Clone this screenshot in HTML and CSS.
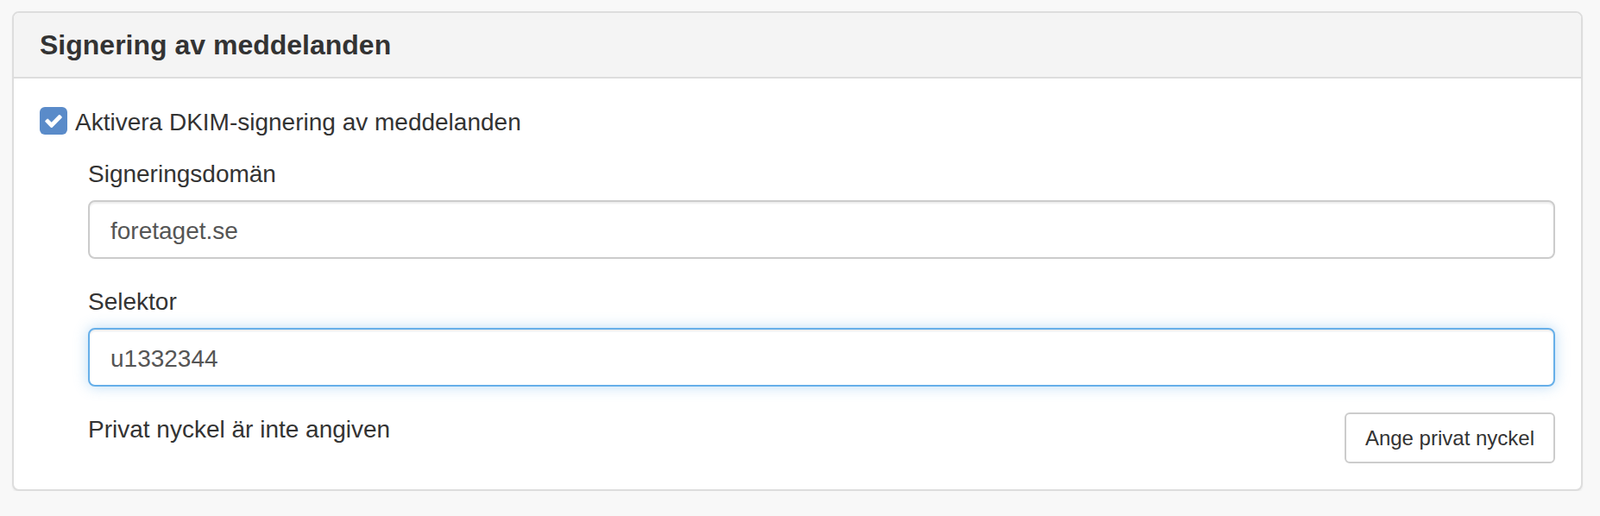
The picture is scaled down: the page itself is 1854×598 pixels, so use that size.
FILE: index.html
```html
<!DOCTYPE html>
<html lang="sv">
<head>
<meta charset="utf-8">
<title>Signering av meddelanden</title>
<link rel="stylesheet" href="styles.css">
</head>
<body>
<div class="panel">
  <div class="panel-heading">
    <h3 class="panel-title">Signering av meddelanden</h3>
  </div>
  <div class="panel-body">
    <label class="checkbox">
      <span class="check-box">
        <svg class="check-icon" viewBox="121 334 1550 1188" width="20" height="15" aria-hidden="true">
          <path fill="#fff" d="M1671 566q0 40-28 68l-724 724-136 136q-28 28-68 28t-68-28l-136-136-362-362q-28-28-28-68t28-68l136-136q28-28 68-28t68 28l294 295 656-657q28-28 68-28t68 28l136 136q28 28 28 68z"/>
        </svg>
      </span>
      <span class="check-label">Aktivera DKIM-signering av meddelanden</span>
    </label>
    <div class="sub-fields">
      <div class="form-group">
        <label class="field-label">Signeringsdomän</label>
        <input class="form-control" type="text" value="foretaget.se">
      </div>
      <div class="form-group">
        <label class="field-label">Selektor</label>
        <input class="form-control is-focused" type="text" value="u1332344">
      </div>
      <div class="key-row">
        <span class="key-status">Privat nyckel är inte angiven</span>
        <button class="btn" type="button">Ange privat nyckel</button>
      </div>
    </div>
  </div>
</div>
</body>
</html>
```

FILE: styles.css
```css
* {
  box-sizing: border-box;
}

html, body {
  margin: 0;
  padding: 0;
}

body {
  background: #f8f8f8;
  font-family: "Liberation Sans", Arial, Helvetica, sans-serif;
  color: #333;
  font-size: 28px;
  line-height: 40px;
}

.panel {
  margin: 13px 20px 0 14px;
  background: #fff;
  border: 2px solid #dddddd;
  border-radius: 8px;
  box-shadow: 0 2px 2px rgba(0, 0, 0, 0.05);
  overflow: hidden;
}

.panel-heading {
  background: #f4f4f4;
  border-bottom: 2px solid #dddddd;
  padding: 20px 30px;
}

.panel-title {
  margin: 0;
  font-size: 32px;
  line-height: 34px;
  font-weight: bold;
  color: #333;
}

.panel-body {
  padding: 31px 30px 30px 30px;
}

.checkbox {
  display: flex;
  align-items: center;
  height: 40px;
  margin-bottom: 20px;
}

.check-box {
  width: 32px;
  height: 32px;
  border-radius: 6px;
  background: #5a8bc9;
  display: flex;
  align-items: center;
  justify-content: center;
  margin-top: -4px;
  margin-right: 9px;
  flex: none;
}

.check-icon {
  display: block;
}

.sub-fields {
  padding-left: 56px;
}

.form-group {
  margin-bottom: 30px;
}

.field-label {
  display: block;
  margin-bottom: 10px;
  font-weight: normal;
}

.form-control {
  display: block;
  width: 100%;
  height: 68px;
  padding: 3px 24px 0 24px;
  font-family: inherit;
  font-size: 28px;
  color: #555;
  background: #fff;
  border: 2px solid #cccccc;
  border-radius: 8px;
  box-shadow: inset 0 2px 2px rgba(0, 0, 0, 0.075);
  outline: none;
}

.form-control.is-focused {
  border-color: #66afe9;
  box-shadow: inset 0 2px 2px rgba(0, 0, 0, 0.075), 0 0 16px rgba(102, 175, 233, 0.45);
}

.key-row {
  display: flex;
  justify-content: space-between;
  align-items: flex-start;
}

.btn {
  height: 59px;
  padding: 0 22px;
  font-family: inherit;
  font-size: 24px;
  line-height: 1;
  color: #333;
  background: #fff;
  border: 2px solid #cccccc;
  border-radius: 6px;
  cursor: pointer;
}
```
